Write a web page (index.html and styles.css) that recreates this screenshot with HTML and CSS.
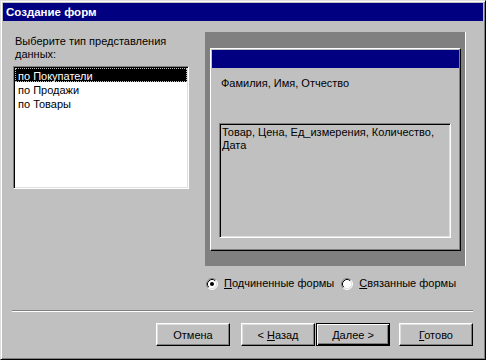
FILE: index.html
```html
<!DOCTYPE html>
<html lang="ru">
<head>
    <meta charset="UTF-8">
    <title>Создание форм</title>
    <link rel="stylesheet" href="styles.css">
</head>
<body>
    <div class="window">
        <div class="titlebar">Создание форм</div>
        <div class="main">
            <div class="left-col">
                <div class="prompt">Выберите тип представления<br>данных:</div>
                <div class="listbox">
                    <div class="list-item selected">по Покупатели</div>
                    <div class="list-item">по Продажи</div>
                    <div class="list-item">по Товары</div>
                </div>
            </div>
            <div class="right-col">
                <div class="preview">
                    <div class="preview-form">
                        <div class="preview-caption"></div>
                        <div class="preview-fields">Фамилия, Имя, Отчество</div>
                        <div class="preview-sub">Товар, Цена, Ед_измерения, Количество, Дата</div>
                    </div>
                </div>
                <div class="radio-row">
                    <label class="radio-option">
                        <svg class="radio" width="12" height="12" viewBox="0 0 12 12">
                            <circle cx="6" cy="6" r="5" fill="#fff"/>
                            <path d="M2.11 9.89 A5.5 5.5 0 0 1 9.89 2.11" fill="none" stroke="#808080"/>
                            <path d="M9.89 2.11 A5.5 5.5 0 0 1 2.11 9.89" fill="none" stroke="#fff"/>
                            <path d="M2.82 9.18 A4.5 4.5 0 0 1 9.18 2.82" fill="none" stroke="#000"/>
                            <path d="M9.18 2.82 A4.5 4.5 0 0 1 2.82 9.18" fill="none" stroke="#dfdfdf"/>
                            <circle cx="6" cy="6" r="2" fill="#000"/>
                        </svg>
                        <span><u>П</u>одчиненные формы</span>
                    </label>
                    <label class="radio-option">
                        <svg class="radio" width="12" height="12" viewBox="0 0 12 12">
                            <circle cx="6" cy="6" r="5" fill="#fff"/>
                            <path d="M2.11 9.89 A5.5 5.5 0 0 1 9.89 2.11" fill="none" stroke="#808080"/>
                            <path d="M9.89 2.11 A5.5 5.5 0 0 1 2.11 9.89" fill="none" stroke="#fff"/>
                            <path d="M2.82 9.18 A4.5 4.5 0 0 1 9.18 2.82" fill="none" stroke="#000"/>
                            <path d="M9.18 2.82 A4.5 4.5 0 0 1 2.82 9.18" fill="none" stroke="#dfdfdf"/>
                        </svg>
                        <span><u>С</u>вязанные формы</span>
                    </label>
                </div>
            </div>
        </div>
        <div class="separator"></div>
        <div class="buttons">
            <button class="btn">Отмена</button>
            <button class="btn btn-back">&lt; <u>Н</u>азад</button>
            <button class="btn btn-default"><u>Д</u>алее &gt;</button>
            <button class="btn btn-finish"><u>Г</u>отово</button>
        </div>
    </div>
</body>
</html>
```

FILE: styles.css
```css
:root {
    --face: #c0c0c0;
    --shadow: #808080;
    --light: #dfdfdf;
    --navy: #000080;
}
body {
    margin: 0;
    font-family: "Liberation Sans", Arial, sans-serif;
    font-size: 11px;
    color: #000;
    background-color: var(--face);
}
.window {
    width: 486px;
    height: 360px;
    box-sizing: border-box;
    padding: 2px;
    background-color: var(--face);
    border: 1px solid;
    border-color: var(--light) #000 #000 var(--light);
    box-shadow: inset 1px 1px #fff, inset -1px -1px var(--shadow);
}
.titlebar {
    height: 18px;
    line-height: 18px;
    padding-left: 3px;
    background-color: var(--navy);
    color: #fff;
    font-weight: bold;
    font-size: 11.5px;
}
.main {
    display: flex;
    height: 289px;
    padding-left: 10px;
}
.left-col {
    width: 176px;
    padding-top: 14px;
}
.prompt {
    line-height: 13px;
    padding-left: 2px;
}
.listbox {
    margin-top: 5px;
    height: 123px;
    box-sizing: border-box;
    background-color: #fff;
    border: 1px solid;
    border-color: var(--shadow) #fff #fff var(--shadow);
    box-shadow: inset 1px 1px #000, inset -1px -1px var(--light);
    padding: 1px;
}
.list-item {
    height: 14px;
    line-height: 14px;
    padding: 0 2px;
    border: 1px solid transparent;
    box-sizing: border-box;
    white-space: nowrap;
}
.list-item.selected {
    background-color: #000;
    color: #fff;
    border: 1px dotted #c0c0c0;
}
.right-col {
    margin-left: 16px;
    width: 261px;
    padding-top: 11px;
}
.preview {
    height: 234px;
    box-sizing: border-box;
    background-color: var(--shadow);
    border-right: 1px solid #fff;
    padding: 16px 4px 15px 5px;
}
.preview-form {
    height: 203px;
    box-sizing: border-box;
    border: 1px solid;
    border-color: #fff #000 #000 #fff;
    box-shadow: inset -1px -1px var(--shadow);
    background-color: var(--face);
    padding: 1px;
}
.preview-caption {
    height: 18px;
    background-color: var(--navy);
}
.preview-fields {
    margin-top: 9px;
    padding-left: 9px;
    line-height: 13px;
}
.preview-sub {
    margin: 33px 0 0 7px;
    width: 232px;
    height: 115px;
    box-sizing: border-box;
    border: 1px solid;
    border-color: var(--shadow) #fff #fff var(--shadow);
    box-shadow: inset 1px 1px #000, inset -1px -1px var(--light);
    padding: 2px 4px 0 2px;
    line-height: 13px;
}
.radio-row {
    display: flex;
    align-items: center;
    margin-top: 11px;
    padding-left: 1px;
    gap: 7px;
}
.radio-option {
    display: flex;
    align-items: center;
    gap: 6px;
    line-height: 13px;
}
.radio {
    display: block;
}
.separator {
    margin-left: 9px;
    width: 461px;
    height: 1px;
    background-color: var(--shadow);
    border-bottom: 1px solid #fff;
}
.buttons {
    display: flex;
    margin-top: 11px;
    padding-left: 153px;
}
.btn {
    width: 74px;
    height: 23px;
    padding: 0;
    font-family: inherit;
    font-size: 11px;
    color: #000;
    background-color: var(--face);
    border: 1px solid;
    border-color: #fff #000 #000 #fff;
    box-shadow: inset -1px -1px var(--shadow), inset 1px 1px var(--light);
    border-radius: 0;
}
.btn-back {
    margin-left: 11px;
}
.btn-default {
    margin-left: 1px;
    border-color: #000;
    box-shadow: inset 1px 1px #fff, inset -1px -1px #000, inset -2px -2px var(--shadow);
}
.btn-finish {
    margin-left: 9px;
}
```
